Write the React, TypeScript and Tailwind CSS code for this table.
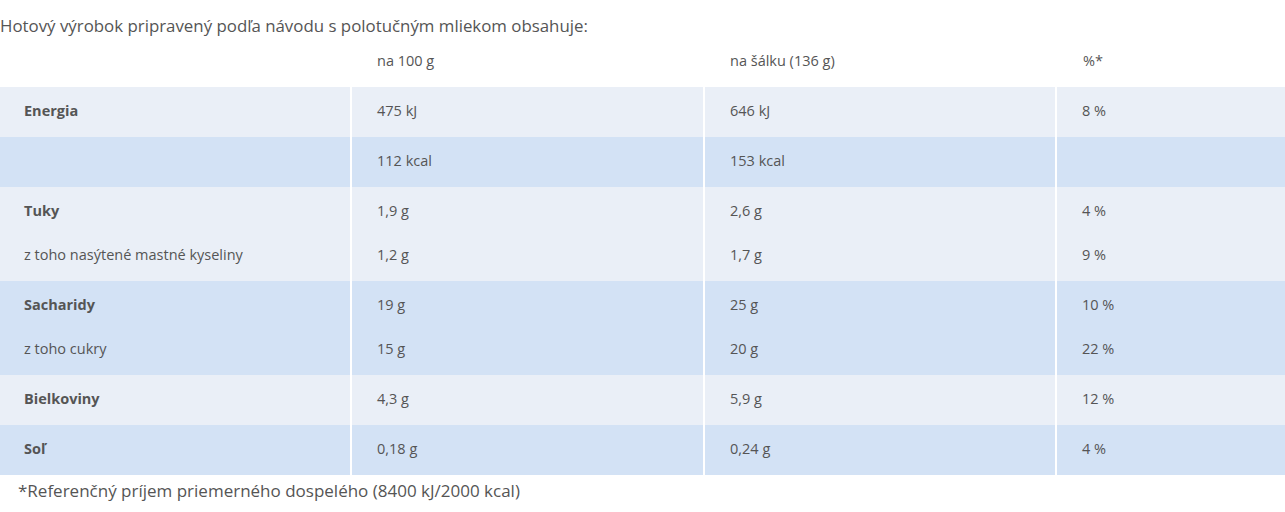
type Row = {
  label: string[];
  per100: string[];
  perCup: string[];
  ri: string[];
  dark?: boolean;
};

const rows: Row[] = [
  { label: ["Energia"], per100: ["475 kJ"], perCup: ["646 kJ"], ri: ["8 %"] },
  { label: [""], per100: ["112 kcal"], perCup: ["153 kcal"], ri: [""], dark: true },
  {
    label: ["Tuky", "z toho nasýtené mastné kyseliny"],
    per100: ["1,9 g", "1,2 g"],
    perCup: ["2,6 g", "1,7 g"],
    ri: ["4 %", "9 %"],
  },
  {
    label: ["Sacharidy", "z toho cukry"],
    per100: ["19 g", "15 g"],
    perCup: ["25 g", "20 g"],
    ri: ["10 %", "22 %"],
    dark: true,
  },
  { label: ["Bielkoviny"], per100: ["4,3 g"], perCup: ["5,9 g"], ri: ["12 %"] },
  { label: ["Soľ"], per100: ["0,18 g"], perCup: ["0,24 g"], ri: ["4 %"], dark: true },
];

const Cell = (props: { lines: string[]; dark?: boolean; first?: boolean }) => {
  const { lines, dark, first } = props;
  return (
    <div
      className={`flex flex-col gap-[20px] pt-[12px] pb-[14px] ${first ? "pl-[24px]" : "pl-[25px]"} ${
        dark ? "bg-[#d3e2f5]" : "bg-[#eaeff7]"
      }`}
    >
      {lines.map((line, i) => (
        <div
          key={i}
          className={`h-[24px] leading-[24px] whitespace-nowrap ${first && i === 0 ? "font-bold" : ""}`}
        >
          {line}
        </div>
      ))}
    </div>
  );
};

export default function App() {
  return (
    <div className="w-[1285px] bg-white text-[#555555] font-['Open_Sans',sans-serif]">
      <p className="pt-[14px] text-[16.85px] leading-[24px] whitespace-nowrap">
        Hotový výrobok pripravený podľa návodu s polotučným mliekom obsahuje:
      </p>
      <div className="grid grid-cols-[350px_351px_350px_228px] gap-x-[2px] text-[14.5px]">
        <div className="h-[49px]" />
        <div className="h-[49px] pl-[25px] leading-[46px]">na 100 g</div>
        <div className="h-[49px] pl-[25px] leading-[46px]">na šálku (136 g)</div>
        <div className="h-[49px] pl-[26px] leading-[46px]">%*</div>
        {rows.map((row, i) => (
          <>
            <Cell key={`a${i}`} lines={row.label} dark={row.dark} first />
            <Cell key={`b${i}`} lines={row.per100} dark={row.dark} />
            <Cell key={`c${i}`} lines={row.perCup} dark={row.dark} />
            <Cell key={`d${i}`} lines={row.ri} dark={row.dark} />
          </>
        ))}
      </div>
      <p className="pl-[18px] pt-[4px] pb-[20px] text-[17px] leading-[24px] whitespace-nowrap">
        *Referenčný príjem priemerného dospelého (8400 kJ/2000 kcal)
      </p>
    </div>
  );
}
